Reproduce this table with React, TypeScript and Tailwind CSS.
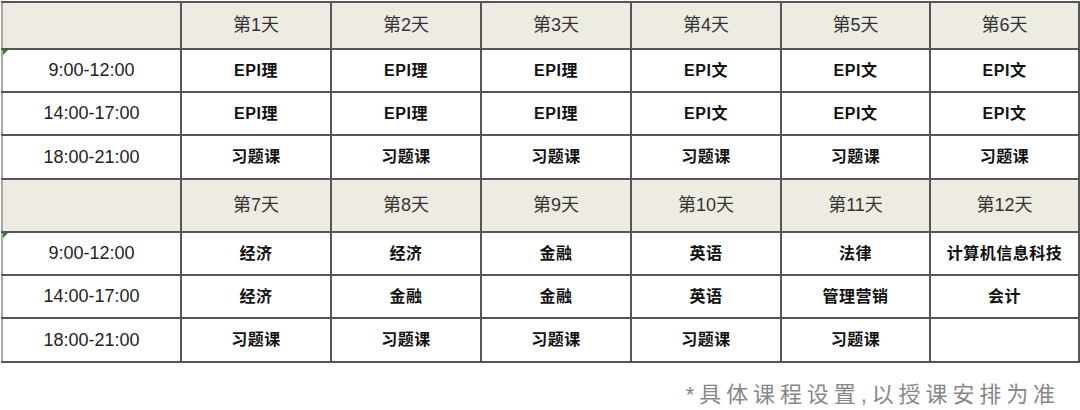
const block1 = {
  days: ["第1天", "第2天", "第3天", "第4天", "第5天", "第6天"],
  rows: [
    { time: "9:00-12:00", items: ["EPI理", "EPI理", "EPI理", "EPI文", "EPI文", "EPI文"] },
    { time: "14:00-17:00", items: ["EPI理", "EPI理", "EPI理", "EPI文", "EPI文", "EPI文"] },
    { time: "18:00-21:00", items: ["习题课", "习题课", "习题课", "习题课", "习题课", "习题课"] },
  ],
};

const block2 = {
  days: ["第7天", "第8天", "第9天", "第10天", "第11天", "第12天"],
  rows: [
    { time: "9:00-12:00", items: ["经济", "经济", "金融", "英语", "法律", "计算机信息科技"] },
    { time: "14:00-17:00", items: ["经济", "金融", "金融", "英语", "管理营销", "会计"] },
    { time: "18:00-21:00", items: ["习题课", "习题课", "习题课", "习题课", "习题课", ""] },
  ],
};

const font = "font-['Liberation_Sans','Noto_Sans_CJK_SC',sans-serif]";

function Block({ data, headH }: { data: typeof block1; headH: string }) {
  return (
    <>
      <tr className={`${headH} bg-[#eeebe2]`}>
        <td className="border-2 border-[#555] border-l-[#a8a8a8]" />
        {data.days.map((d) => (
          <td key={d} className="border-2 border-[#555] text-center text-[18px] text-[#333]">
            {d}
          </td>
        ))}
      </tr>
      {data.rows.map((r, i) => (
        <tr key={r.time} className={i === 2 ? "h-[44px]" : "h-[43px]"}>
          <td className="relative border-2 border-[#555] border-l-[#a8a8a8] text-center text-[18px] text-[#222]">
            {i === 0 && (
              <span className="absolute left-0 top-0 h-0 w-0 border-r-[5px] border-t-[5px] border-r-transparent border-t-[#1f8a1f]" />
            )}
            {r.time}
          </td>
          {r.items.map((it, j) => (
            <td key={j} className="border-2 border-[#555] text-center text-[16px] font-bold text-[#111]">
              <span className="tracking-[0.5px]">{it}</span>
            </td>
          ))}
        </tr>
      ))}
    </>
  );
}

export default function App() {
  return (
    <div className={`w-[1080px] h-[410px] bg-white ${font} overflow-hidden`}>
      <div className="pt-[1px] pl-[1px]">
        <table className="table-fixed border-collapse w-[1077px] border-t-2 border-r-2 border-[#a8a8a8]">
          <colgroup>
            <col className="w-[179px]" />
            <col className="w-[150px]" />
            <col className="w-[150px]" />
            <col className="w-[150px]" />
            <col className="w-[150px]" />
            <col className="w-[149px]" />
            <col className="w-[149px]" />
          </colgroup>
          <tbody>
            <Block data={block1} headH="h-[47px]" />
            <Block data={block2} headH="h-[53px]" />
          </tbody>
        </table>
      </div>
      <div className="flex justify-end pr-[20px] pt-[19px]">
        <p className="text-[22px] leading-[26px] tracking-[4.9px] text-[#878787]">*具体课程设置,以授课安排为准</p>
      </div>
    </div>
  );
}
